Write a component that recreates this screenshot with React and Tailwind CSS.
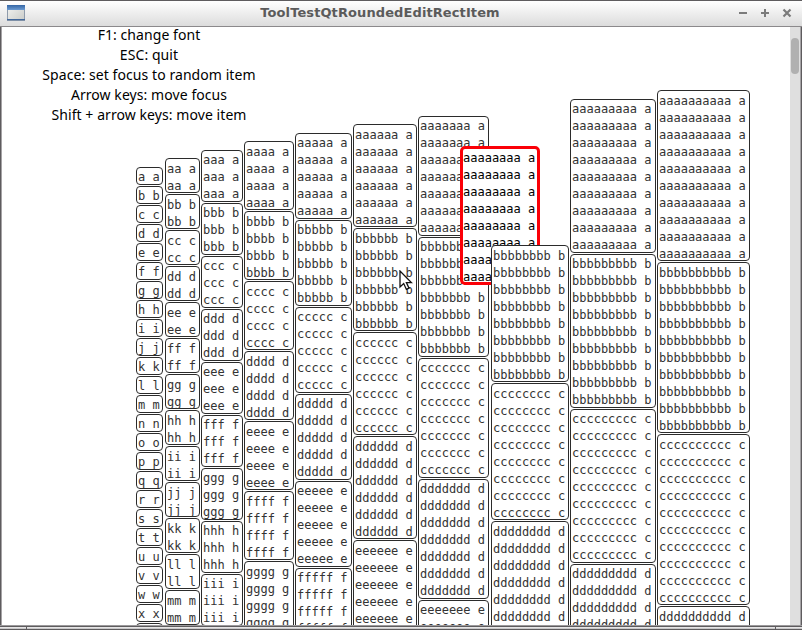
import React from "react";

const LETTERS = "abcdefghijklmnopqrstuvwxyz";

const COLUMNS = [
  { n: 1, start: 0, pos: "mt-[140px] w-[27px]", item: "h-[18px]", text: "mt-px" },
  { n: 2, start: 0, pos: "mt-[131px] ml-[2px] w-[35px]", item: "h-[35px]", text: "mt-[2px]" },
  { n: 3, start: 0, pos: "mt-[123px] ml-px w-[42px]", item: "h-[52px]", text: "mt-px" },
  { n: 4, start: 0, pos: "mt-[114px] ml-px w-[50px]", item: "h-[69px]", text: "mt-[2px]" },
  { n: 5, start: 0, pos: "mt-[106px] ml-px w-[57px]", item: "h-[86px]", text: "mt-px" },
  { n: 6, start: 0, pos: "mt-[97px] ml-px w-[64px]", item: "h-[103px]", text: "mt-[2px]" },
  { n: 7, start: 0, pos: "mt-[89px] ml-px w-[71px]", item: "h-[120px]", text: "mt-px" },
  { n: 8, start: 1, pos: "mt-[218px] ml-[2px] w-[78px] z-20", item: "h-[137px]", text: "mt-[2px]" },
  { n: 9, start: 0, pos: "mt-[72px] ml-px w-[86px]", item: "h-[154px]", text: "mt-px" },
  { n: 10, start: 0, pos: "mt-[63px] ml-px w-[93px]", item: "h-[171px]", text: "mt-[2px]" },
];

const HELP = [
  "F1: change font",
  "ESC: quit",
  "Space: set focus to random item",
  "Arrow keys: move focus",
  "Shift + arrow keys: move item",
];

function Lines({ letter, n, className }) {
  const line = letter.repeat(n) + " " + letter;
  return (
    <div className={`whitespace-pre ${className}`}>
      {Array.from({ length: n }, (_, i) => (
        <div key={i} className="h-[17px]">{line}</div>
      ))}
    </div>
  );
}

function Column({ n, start, pos, item, text }) {
  const pitch = 17 * n + 2;
  const top = Number(pos.match(/mt-\[(\d+)px\]/)[1]);
  const count = Math.min(LETTERS.length - start, Math.ceil((598 - top) / pitch));
  return (
    <div className={`relative flex shrink-0 flex-col gap-px ${pos}`}>
      {LETTERS.slice(start, start + count).split("").map((l) => (
        <div
          key={l}
          className={`shrink-0 overflow-hidden rounded-[4px] border border-[#2b2b2b] bg-white pl-px ${item}`}
        >
          <Lines letter={l} n={n} className={text} />
        </div>
      ))}
    </div>
  );
}

function TitleBar() {
  return (
    <div className="flex h-[27px] shrink-0 items-center border-t border-b border-t-[#5e5c5e] border-b-[#8b898b] bg-linear-to-b from-white to-[#dcdcdc] pr-[10px] pb-px pl-[7px]">
      <svg width="18" height="16" viewBox="0 0 18 16" className="shrink-0">
        <defs>
          <linearGradient id="bar" x1="0" y1="0" x2="0" y2="1">
            <stop offset="0" stopColor="#3465a4" />
            <stop offset="1" stopColor="#6c9bd2" />
          </linearGradient>
          <linearGradient id="pane" x1="0" y1="0" x2="1" y2="1">
            <stop offset="0" stopColor="#f4f4f2" />
            <stop offset="1" stopColor="#c9cbc8" />
          </linearGradient>
        </defs>
        <rect x="0.5" y="0.5" width="17" height="15" fill="url(#pane)" stroke="#8f9bab" />
        <rect x="0" y="0" width="18" height="5" fill="url(#bar)" />
        <rect x="0" y="14" width="18" height="1.2" fill="#41679b" />
      </svg>
      <div className="flex-1 pr-[3px] text-center font-['DejaVu_Sans',sans-serif] text-[13px] leading-[20px] font-bold tracking-[0.1px] text-[#5b5b5b]">
        <span>ToolTestQtRoundedEditRectItem</span>
      </div>
      <svg width="54" height="10" viewBox="0 0 54 10" className="shrink-0" fill="none" stroke="#7b7b7b" strokeWidth="2">
        <path d="M1 5H9M23 5H31M27 1V9" />
        <path d="M45.5 1.5L52.5 8.5M52.5 1.5L45.5 8.5" strokeWidth="2.2" />
      </svg>
    </div>
  );
}

export default function App() {
  return (
    <div className="flex h-[630px] w-[802px] flex-col overflow-hidden bg-white">
      <TitleBar />
      <div className="flex h-[598px] shrink-0">
        <div className="w-px bg-[#5e5c5e]" />
        <div className="w-px bg-[#a5a3a5]" />
        <div className="relative flex w-[788px] overflow-hidden bg-white">
          <div className="flex pl-[134px] font-['DejaVu_Sans_Mono',monospace] text-[12px] leading-[17px] text-[#333333]">
            {COLUMNS.map((c) => (
              <Column key={c.n} {...c} />
            ))}
          </div>
          <div className="absolute top-[119px] left-[458px] z-10 h-[139px] w-[80px] overflow-hidden rounded-[5px] border-[3px] border-[#fb0007] bg-white font-['DejaVu_Sans_Mono',monospace] text-[12px] leading-[17px] text-black">
            <Lines letter="a" n={8} className="mt-px" />
          </div>
          <div className="absolute top-[-2px] left-[27px] w-[240px] text-center font-['Noto_Sans',sans-serif] text-[14px] leading-[20px] tracking-[0.07px] whitespace-nowrap text-black">
            {HELP.map((h) => (
              <div key={h}>{h}</div>
            ))}
          </div>
          <svg className="absolute top-[243px] left-[397px] z-30" width="14" height="21" viewBox="0 0 14 21">
            <path d="M1 1V17L4.7 13.6L7.4 19.4L10 18.2L7.4 12.6H12.4Z" fill="#fff" stroke="#111" strokeWidth="1.3" />
          </svg>
        </div>
        <div className="w-[10px] bg-[#dfdfdf] px-px pt-[11px]">
          <div className="h-[36px] rounded-[4px] bg-[#b0b0b0]" />
        </div>
        <div className="w-px bg-[#a5a3a5]" />
        <div className="w-px bg-[#5e5c5e]" />
      </div>
      <div className="flex h-[5px] shrink-0 flex-col">
        <div className="h-px bg-[#9c9a9c]" />
        <div className="h-px bg-[#5e5c5e]" />
        <div className="flex h-[2px] justify-between bg-linear-to-b from-[#f4f4f4] to-[#bcbabc] px-[26px]">
          <div className="w-px bg-[#5e5c5e]" />
          <div className="w-px bg-[#5e5c5e]" />
        </div>
        <div className="h-px bg-[#5e5c5e]" />
      </div>
    </div>
  );
}
